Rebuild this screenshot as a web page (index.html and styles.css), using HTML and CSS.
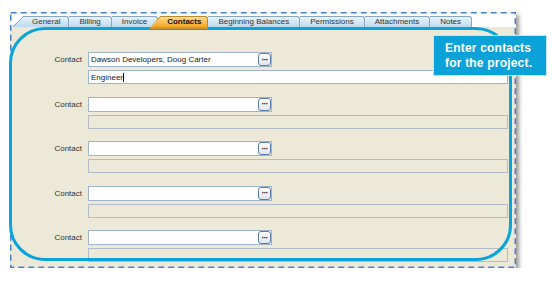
FILE: index.html
```html
<!DOCTYPE html>
<html lang="en">
<head>
  <meta charset="UTF-8">
  <meta name="viewport" content="width=device-width, initial-scale=1.0">
  <title>Project - Contacts</title>
  <link rel="stylesheet" href="styles.css">
</head>
<body>
  <div class="shot">
    <div class="tabs">
      <div class="tab tab-first">General</div>
      <div class="tab">Billing</div>
      <div class="tab">Invoice</div>
      <div class="tab active">Contacts</div>
      <div class="tab">Beginning Balances</div>
      <div class="tab">Permissions</div>
      <div class="tab">Attachments</div>
      <div class="tab">Notes</div>
    </div>

    <div class="panel">
      <div class="contact-row">
        <label>Contact</label>
        <div class="lookup"><span class="value">Dawson Developers, Doug Carter</span><button class="dots">&middot;&middot;&middot;</button></div>
        <div class="detail editing">Engineer<span class="caret"></span></div>
      </div>
      <div class="contact-row">
        <label>Contact</label>
        <div class="lookup"><span class="value"></span><button class="dots">&middot;&middot;&middot;</button></div>
        <div class="detail"></div>
      </div>
      <div class="contact-row">
        <label>Contact</label>
        <div class="lookup"><span class="value"></span><button class="dots">&middot;&middot;&middot;</button></div>
        <div class="detail"></div>
      </div>
      <div class="contact-row">
        <label>Contact</label>
        <div class="lookup"><span class="value"></span><button class="dots">&middot;&middot;&middot;</button></div>
        <div class="detail"></div>
      </div>
      <div class="contact-row">
        <label>Contact</label>
        <div class="lookup"><span class="value"></span><button class="dots">&middot;&middot;&middot;</button></div>
        <div class="detail"></div>
      </div>
    </div>

    <!-- screenshot frame + callout markup -->
    <svg class="dash" width="506" height="256" viewBox="0 0 506 256">
      <rect x="0.75" y="0.75" width="504.5" height="254.5" fill="none" stroke="#4a80d0" stroke-width="1.5" stroke-dasharray="6 4"/>
    </svg>
    <div class="highlight"></div>
    <div class="callout">Enter contacts<br>for the project.</div>
  </div>
</body>
</html>
```

FILE: styles.css
```css
* {
  box-sizing: border-box;
  margin: 0;
  padding: 0;
}

body {
  background: #fff;
  font-family: 'Liberation Sans', Arial, sans-serif;
}

.shot {
  position: relative;
  margin: 12px 0 0 10px;
  width: 506px;
  height: 256px;
  background: #ece9d8;
  box-shadow: 3px 3px 4px rgba(0,0,0,0.4);
}

/* tab strip */
.tabs {
  display: flex;
  align-items: flex-start;
  height: 15px;
  padding: 4px 0 0 2px;
  background: #fff;
}

.tab {
  height: 11px;
  padding: 0 10px;
  border-top: 1px solid #8aa5bf;
  border-right: 1px solid #8aa5bf;
  border-top-right-radius: 3px;
  background: linear-gradient(#e8f3fb, #bcdaee);
  font-size: 8px;
  line-height: 10px;
  color: #333;
  white-space: nowrap;
}

.tab-first,
.tab.active {
  padding-left: 20px;
  clip-path: polygon(0 100%, 11px 0, 100% 0, 100% 100%);
  background:
    linear-gradient(to bottom right, transparent calc(50% - 0.7px), #8aa5bf calc(50% - 0.7px), #8aa5bf calc(50% + 0.7px), transparent calc(50% + 0.7px)) 0 0 / 11px 11px no-repeat,
    linear-gradient(#e8f3fb, #bcdaee);
}

.tab-first {
  padding-right: 8px;
}

.tab.active {
  position: relative;
  z-index: 3;
  margin-left: -9px;
  padding: 0 6px 0 18px;
  height: 13px;
  border-color: #b98a2e;
  border-bottom: 2px solid #c79b3c;
  font-weight: bold;
  color: #111;
  background:
    linear-gradient(to bottom right, transparent calc(50% - 0.7px), #b98a2e calc(50% - 0.7px), #b98a2e calc(50% + 0.7px), transparent calc(50% + 0.7px)) 0 0 / 11px 11px no-repeat,
    linear-gradient(#fedb8e, #f6a423);
}

/* contact rows */
.panel {
  padding: 25px 7px 0 0;
}

.contact-row {
  display: grid;
  grid-template-columns: 72px 420px;
  column-gap: 6px;
  row-gap: 3px;
  margin-bottom: 12.5px;
}

.contact-row label {
  align-self: center;
  text-align: right;
  font-size: 8px;
  color: #333;
}

.lookup {
  display: flex;
  align-items: center;
  width: 184px;
  height: 15px;
  border: 1px solid #9fb4ca;
  background: #fff;
}

.lookup .value {
  flex: 1;
  padding-left: 2px;
  font-size: 8px;
  color: #222;
  white-space: nowrap;
}

.dots {
  display: flex;
  align-items: center;
  justify-content: center;
  width: 13px;
  height: 13px;
  border: 1px solid #5a7cab;
  border-radius: 3px;
  background: linear-gradient(#fff, #dfe6ee);
  font-family: 'Liberation Sans', Arial, sans-serif;
  font-size: 9px;
  font-weight: bold;
  letter-spacing: -1px;
  color: #1b2c4a;
}

.detail {
  grid-column: 2;
  height: 14px;
  border: 1px solid #b2bdc7;
  background: #ece9d8;
}

.detail.editing {
  display: flex;
  align-items: center;
  padding-left: 2px;
  border-color: #9fb4ca;
  background: #fff;
  font-size: 8px;
  color: #222;
}

.caret {
  width: 1px;
  height: 9px;
  background: #000;
}

/* overlays */
.dash {
  position: absolute;
  left: 0;
  top: 0;
}

.highlight {
  position: absolute;
  z-index: 1;
  left: -1px;
  top: 15px;
  width: 503px;
  height: 234px;
  border: 3px solid #0aa3da;
  border-radius: 36px;
}

.callout {
  position: absolute;
  z-index: 4;
  left: 423px;
  top: 23px;
  width: 114px;
  height: 41px;
  padding: 5px 0 0 11px;
  border: 1px solid #c3e6f4;
  background: #0ba2d9;
  color: #fff;
  font-size: 12px;
  font-weight: bold;
  line-height: 15px;
  letter-spacing: 0.2px;
}
```
